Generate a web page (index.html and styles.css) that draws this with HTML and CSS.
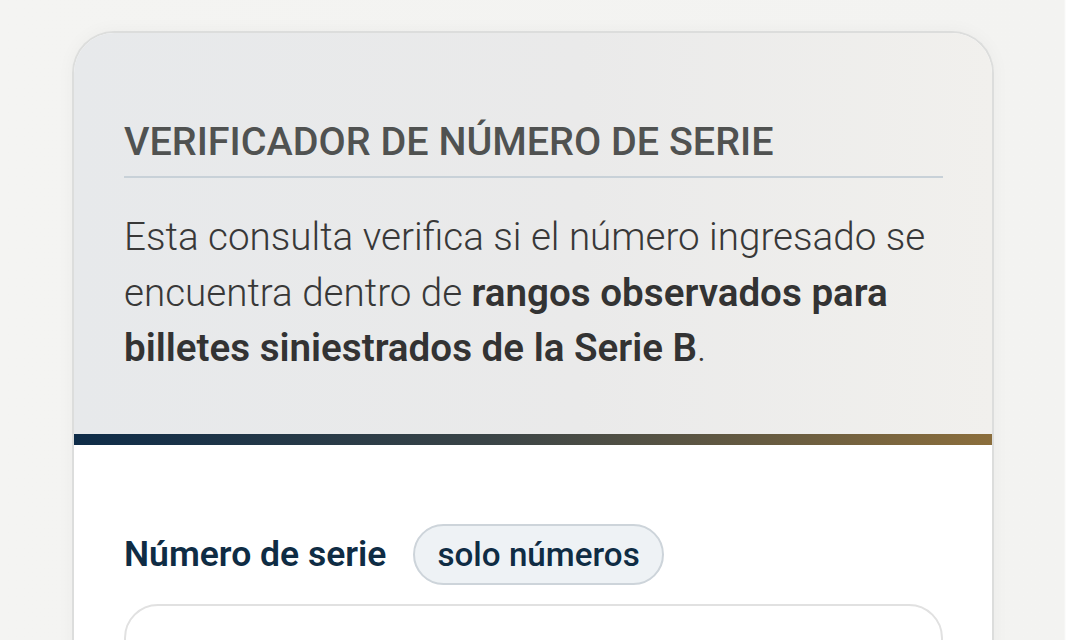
FILE: index.html
```html
<!DOCTYPE html>
<html lang="es">

<head>
    <meta charset="UTF-8">
    <meta name="viewport" content="width=device-width, initial-scale=1.0">
    <title>Verificador de número de serie</title>
    <link rel="stylesheet" href="styles.css">
</head>

<body>
    <div class="page">
        <div class="card">
            <div class="card-head">
                <h1 class="title">VERIFICADOR DE NÚMERO DE SERIE</h1>
                <p class="intro">Esta consulta verifica si el número ingresado se encuentra dentro de <strong>rangos observados para billetes siniestrados de la Serie B</strong>.</p>
            </div>
            <div class="accent-bar"></div>
            <div class="card-body">
                <div class="field-label">
                    <label for="serial">Número de serie</label>
                    <span class="pill">solo números</span>
                </div>
                <div class="input-box">
                    <input id="serial" type="text" inputmode="numeric">
                </div>
            </div>
        </div>
    </div>
</body>

</html>
```

FILE: styles.css
```css
html,
body {
    margin: 0;
    height: 100%;
}

body {
    background: linear-gradient(90deg, #f4f4f2 0%, #f3f3f1 1064px, #ffffff 1066px);
    font-family: Roboto, "Noto Sans", sans-serif;
    overflow: hidden;
}

.page {
    padding: 31px 0 0 72px;
}

.card {
    width: 922px;
    box-sizing: border-box;
    border: 2px solid #dcdddc;
    border-bottom: none;
    border-radius: 42px 42px 0 0;
    overflow: hidden;
    background: #ffffff;
    box-shadow: 0 0 18px rgba(0, 0, 0, 0.04);
}

.card-head {
    background: linear-gradient(90deg, #e7e9eb 0%, #eaeaea 55%, #f1f0ed 100%);
    padding: 87px 49px 58px 50px;
}

.title {
    margin: 0;
    padding-bottom: 12px;
    border-bottom: 2px solid #c8d1d8;
    font-size: 39.5px;
    font-weight: 500;
    line-height: 44px;
    color: #505251;
}

.intro {
    margin: 31px 0 0 0;
    font-size: 38.6px;
    font-weight: 300;
    line-height: 55.5px;
    color: #383838;
}

.intro strong {
    font-weight: 600;
    color: #333333;
}

.accent-bar {
    height: 11px;
    background: linear-gradient(90deg, #0e2c48 0%, #3a4447 45%, #8b6e3c 100%);
}

.card-body {
    padding: 79px 49px 0 50px;
}

.field-label {
    display: flex;
    align-items: center;
    gap: 27px;
}

.field-label label {
    font-size: 35.5px;
    font-weight: 600;
    color: #0f2c44;
}

.pill {
    display: inline-block;
    padding: 10px 22px;
    border: 2px solid #cdd4da;
    border-radius: 40px;
    background: #eef2f5;
    font-size: 33.2px;
    font-weight: 500;
    line-height: 37px;
    color: #0f2c44;
}

.input-box {
    margin-top: 19px;
    height: 90px;
    border: 2px solid #e1e1e1;
    border-radius: 34px;
}

.input-box input {
    width: 100%;
    height: 100%;
    border: none;
    background: transparent;
    outline: none;
}
```
